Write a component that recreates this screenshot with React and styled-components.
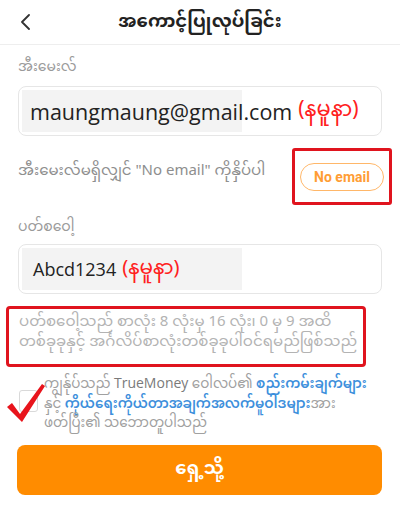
import React from "react";
import styled, { createGlobalStyle } from "styled-components";

const MY = `"Noto Sans Myanmar", "Noto Sans Myanmar UI", Padauk, "Myanmar Text", "Noto Sans", Roboto, sans-serif`;

const Global = createGlobalStyle`
  html, body { margin: 0; padding: 0; background: #fff; }
  body { font-family: ${MY}; width: 400px; height: 520px; overflow: hidden; }
  * { box-sizing: border-box; }
`;

const Page = styled.div`
  width: 400px;
  height: 520px;
  display: flex;
  flex-direction: column;
  background: #fff;
`;

const Header = styled.div`
  height: 45px;
  display: flex;
  align-items: center;
  justify-content: center;
  position: relative;
  border-bottom: 1px solid #eeeeee;
`;

const Back = styled.div`
  position: absolute;
  left: 16px;
  top: 12px;
  width: 20px;
  height: 20px;
  display: flex;
  align-items: center;
  justify-content: center;
`;

const Title = styled.div`
  font-size: 18px;
  font-weight: 700;
  color: #222;
`;

const Body = styled.div`
  padding: 12px 18px 0 18px;
  display: flex;
  flex-direction: column;
`;

const Label = styled.div`
  font-size: 14px;
  color: #9a9a9a;
  height: 22px;
  line-height: 22px;
  margin-top: ${(p) => p.$mt || 0}px;
  margin-bottom: ${(p) => p.$mb || 0}px;
`;

const InputBox = styled.div`
  height: 50px;
  border: 1px solid #e6e6e6;
  border-radius: 8px;
  padding: 3px;
  display: flex;
  align-items: stretch;
`;

const InputText = styled.div`
  display: flex;
  align-items: center;
  position: relative;
  padding-left: ${(p) => p.$pl}px;
  font-family: ${(p) => (p.$sans ? `"Open Sans", ${MY}` : MY)};
  font-size: ${(p) => p.$fs}px;
  color: #222;
  white-space: nowrap;
  &::before {
    content: "";
    position: absolute;
    left: 0;
    top: 0;
    bottom: 0;
    width: 220px;
    background: #f3f3f3;
    z-index: 0;
  }
  & > * { position: relative; z-index: 1; }
`;

const Sample = styled.span`
  color: #ff2020;
  font-size: ${(p) => p.$fs}px;
  margin-left: ${(p) => p.$ml}px;
  font-family: ${MY};
`;

const NoEmailRow = styled.div`
  display: flex;
  align-items: flex-start;
  justify-content: space-between;
  margin-top: 12px;
  margin-right: -10px;
  height: 57px;
`;

const NoEmailText = styled.div`
  font-size: 15px;
  color: #8e8e8e;
  font-family: ${MY};
  line-height: 24px;
  padding-top: 12px;
`;

const RedFrame = styled.div`
  border: 3px solid #e0141e;
  border-radius: 3px;
  width: 100px;
  height: 57px;
  display: flex;
  align-items: center;
  justify-content: center;
`;

const Pill = styled.div`
  height: 28px;
  width: 84px;
  border: 1.5px solid #ffb769;
  border-radius: 14px;
  display: flex;
  align-items: center;
  justify-content: center;
  font-family: Roboto, "Open Sans", sans-serif;
  font-weight: 700;
  font-size: 14px;
  color: #ff9d34;
`;

const Hint = styled.div`
  margin: 12px 16px 0 -12px;
  height: 61px;
  border: 3px solid #e0141e;
  border-radius: 4px;
  padding: 4px 0 0 10px;
  font-size: 15px;
  color: #b3b3b3;
  line-height: 20px;
  white-space: nowrap;
`;

const Agree = styled.div`
  margin-top: 6px;
  display: flex;
  position: relative;
  padding-left: 26px;
`;

const Check = styled.div`
  position: absolute;
  left: 1px;
  top: 17px;
  width: 19px;
  height: 22px;
  border: 1.5px solid #d9d9d9;
  border-radius: 3px;
`;

const Tick = styled.svg`
  position: absolute;
  left: -12px;
  top: 9px;
`;

const AgreeText = styled.div`
  font-size: 13.5px;
  color: #a0a0a0;
  line-height: 19.5px;
  white-space: nowrap;
`;

const Strong = styled.span`
  color: #7a7a7a;
  font-family: "Open Sans", ${MY};
  font-weight: 400;
  font-size: 14px;
`;

const Link = styled.span`
  color: #3d8fdc;
  font-weight: 600;
`;

const Button = styled.div`
  margin: 10px 0 0 -1px;
  height: 50px;
  background: #ff8c00;
  border-radius: 8px;
  display: flex;
  align-items: center;
  justify-content: center;
  color: #fff;
  font-size: 18px;
  font-weight: 700;
`;

export default function App() {
  return (
    <Page>
      <Global />
      <Header>
        <Back>
          <svg width="12" height="16" viewBox="0 0 12 16">
            <path d="M9 1 L2 8 L9 15" fill="none" stroke="#333" strokeWidth="1.8" strokeLinecap="round" strokeLinejoin="round" />
          </svg>
        </Back>
        <Title>အကောင့်ပြုလုပ်ခြင်း</Title>
      </Header>
      <Body>
        <Label $mb={7}>အီးမေးလ်</Label>
        <InputBox>
          <InputText $pl={8} $fs={21.5} $sans>
            <span>maungmaung@gmail.com</span>
            <Sample $fs={21} $ml={6}>(နမူနာ)</Sample>
          </InputText>
        </InputBox>
        <NoEmailRow>
          <NoEmailText>အီးမေးလ်မရှိလျှင် "No email" ကိုနှိပ်ပါ</NoEmailText>
          <RedFrame>
            <Pill>No email</Pill>
          </RedFrame>
        </NoEmailRow>
        <Label $mt={12} $mb={5}>ပတ်စဝေါ့</Label>
        <InputBox>
          <InputText $pl={11} $fs={18} $sans>
            <span>Abcd1234</span>
            <Sample $fs={20} $ml={6}>(နမူနာ)</Sample>
          </InputText>
        </InputBox>
        <Hint>
          ပတ်စဝေါ့သည် စာလုံး 8 လုံးမှ 16 လုံး၊ 0 မှ 9 အထိ
          <br />
          တစ်ခုခုနှင့် အင်္ဂလိပ်စာလုံးတစ်ခုခုပါဝင်ရမည်ဖြစ်သည်
        </Hint>
        <Agree>
          <Check />
          <Tick width="40" height="42" viewBox="0 0 40 42">
            <path d="M1 25 L6 21 L14 32 L36 2 L39 4 L16 40 Z" fill="#e8141c" />
          </Tick>
          <AgreeText>
            ကျွန်ုပ်သည် <Strong>TrueMoney</Strong> ဝေါလပ်၏ <Link>စည်းကမ်းချက်များ</Link>
            <br />
            နှင့် <Link>ကိုယ်ရေးကိုယ်တာအချက်အလက်မူဝါဒများ</Link>အား
            <br />
            ဖတ်ပြီး၏ သဘောတူပါသည်
          </AgreeText>
        </Agree>
        <Button>ရှေ့သို့</Button>
      </Body>
    </Page>
  );
}
